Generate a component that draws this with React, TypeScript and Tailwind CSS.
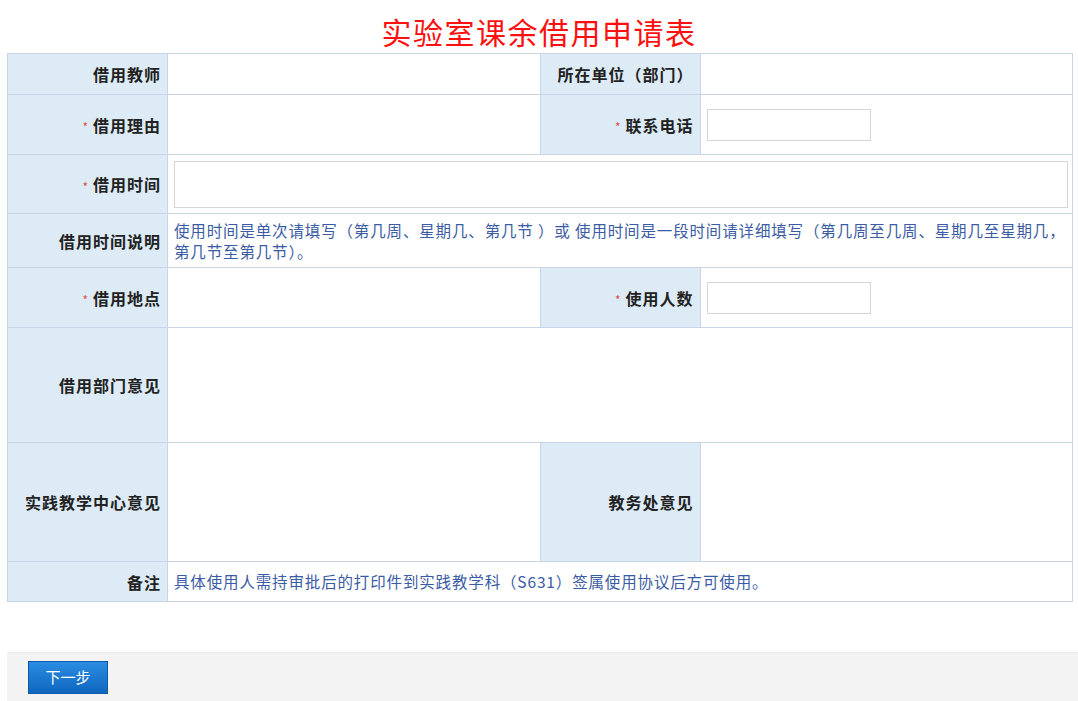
import type { ReactNode } from 'react'

const FONT = { fontFamily: '"Noto Sans CJK SC", "Noto Sans", sans-serif' }

const Label = ({ children, required, className = '' }: { children: ReactNode; required?: boolean; className?: string }) => (
    <td
        className={`border border-[#c9d5e6] bg-[#dcebf5] pr-[6px] text-right align-middle text-[16px] font-bold tracking-[1px] text-[#222] ${className}`}
    >
        {required && <span className="mr-[4px] align-middle text-[12px] font-normal text-[#e0504a]">*</span>}
        {children}
    </td>
)

const Cell = ({ children, colSpan, className = '' }: { children?: ReactNode; colSpan?: number; className?: string }) => (
    <td colSpan={colSpan} className={`border border-[#c9d5e6] bg-white align-middle ${className}`}>
        {children}
    </td>
)

const SmallInput = () => (
    <input type="text" className="ml-[6px] block h-[32px] w-[164px] border border-[#d6d6d6] bg-white outline-none" />
)

const Note = ({ children }: { children: ReactNode }) => (
    <div className="pl-[6px] pr-[6px] text-[15.5px] leading-[21px] tracking-[0.85px] text-[#3b5ba5]">{children}</div>
)

export default function App() {
    return (
        <div className="min-h-[701px] w-full bg-white" style={FONT}>
            <div className="flex h-[53px] items-center justify-center pt-[8px]">
                <h1 className="text-[30px] leading-none tracking-[1.5px] text-[#ff1010]">实验室课余借用申请表</h1>
            </div>

            <div className="pl-[7px] pr-[5px]">
                <table className="w-full table-fixed border-collapse">
                    <colgroup>
                        <col className="w-[160px]" />
                        <col />
                        <col className="w-[160px]" />
                        <col />
                    </colgroup>
                    <tbody>
                        <tr className="h-[41px]">
                            <Label>借用教师</Label>
                            <Cell />
                            <Label>所在单位（部门）</Label>
                            <Cell />
                        </tr>
                        <tr className="h-[60px]">
                            <Label required>借用理由</Label>
                            <Cell />
                            <Label required>联系电话</Label>
                            <Cell>
                                <SmallInput />
                            </Cell>
                        </tr>
                        <tr className="h-[59px]">
                            <Label required>借用时间</Label>
                            <Cell colSpan={3} className="pl-[6px] pr-[4px]">
                                <input type="text" className="block h-[47px] w-full border border-[#d6d6d6] bg-white outline-none" />
                            </Cell>
                        </tr>
                        <tr className="h-[54px]">
                            <Label>借用时间说明</Label>
                            <Cell colSpan={3}>
                                <Note>
                                    使用时间是单次请填写（第几周、星期几、第几节 ）或 使用时间是一段时间请详细填写（第几周至几周、星期几至星期几，第几节至第几节）。
                                </Note>
                            </Cell>
                        </tr>
                        <tr className="h-[60px]">
                            <Label required>借用地点</Label>
                            <Cell />
                            <Label required>使用人数</Label>
                            <Cell>
                                <SmallInput />
                            </Cell>
                        </tr>
                        <tr className="h-[115px]">
                            <Label>借用部门意见</Label>
                            <Cell colSpan={3} />
                        </tr>
                        <tr className="h-[119px]">
                            <Label>实践教学中心意见</Label>
                            <Cell />
                            <Label>教务处意见</Label>
                            <Cell />
                        </tr>
                        <tr className="h-[40px]">
                            <Label>备注</Label>
                            <Cell colSpan={3}>
                                <Note>具体使用人需持审批后的打印件到实践教学科（S631）签属使用协议后方可使用。</Note>
                            </Cell>
                        </tr>
                    </tbody>
                </table>
            </div>

            <div className="mt-[50px] ml-[7px] flex h-[50px] items-center border-t border-[#ebebeb] bg-[#f3f3f3] pl-[21px]">
                <button
                    type="button"
                    className="h-[33px] w-[80px] border border-[#0d5aa6] bg-gradient-to-b from-[#2a8ce2] to-[#0f67be] text-[15px] text-white"
                >
                    下一步
                </button>
            </div>
        </div>
    )
}
